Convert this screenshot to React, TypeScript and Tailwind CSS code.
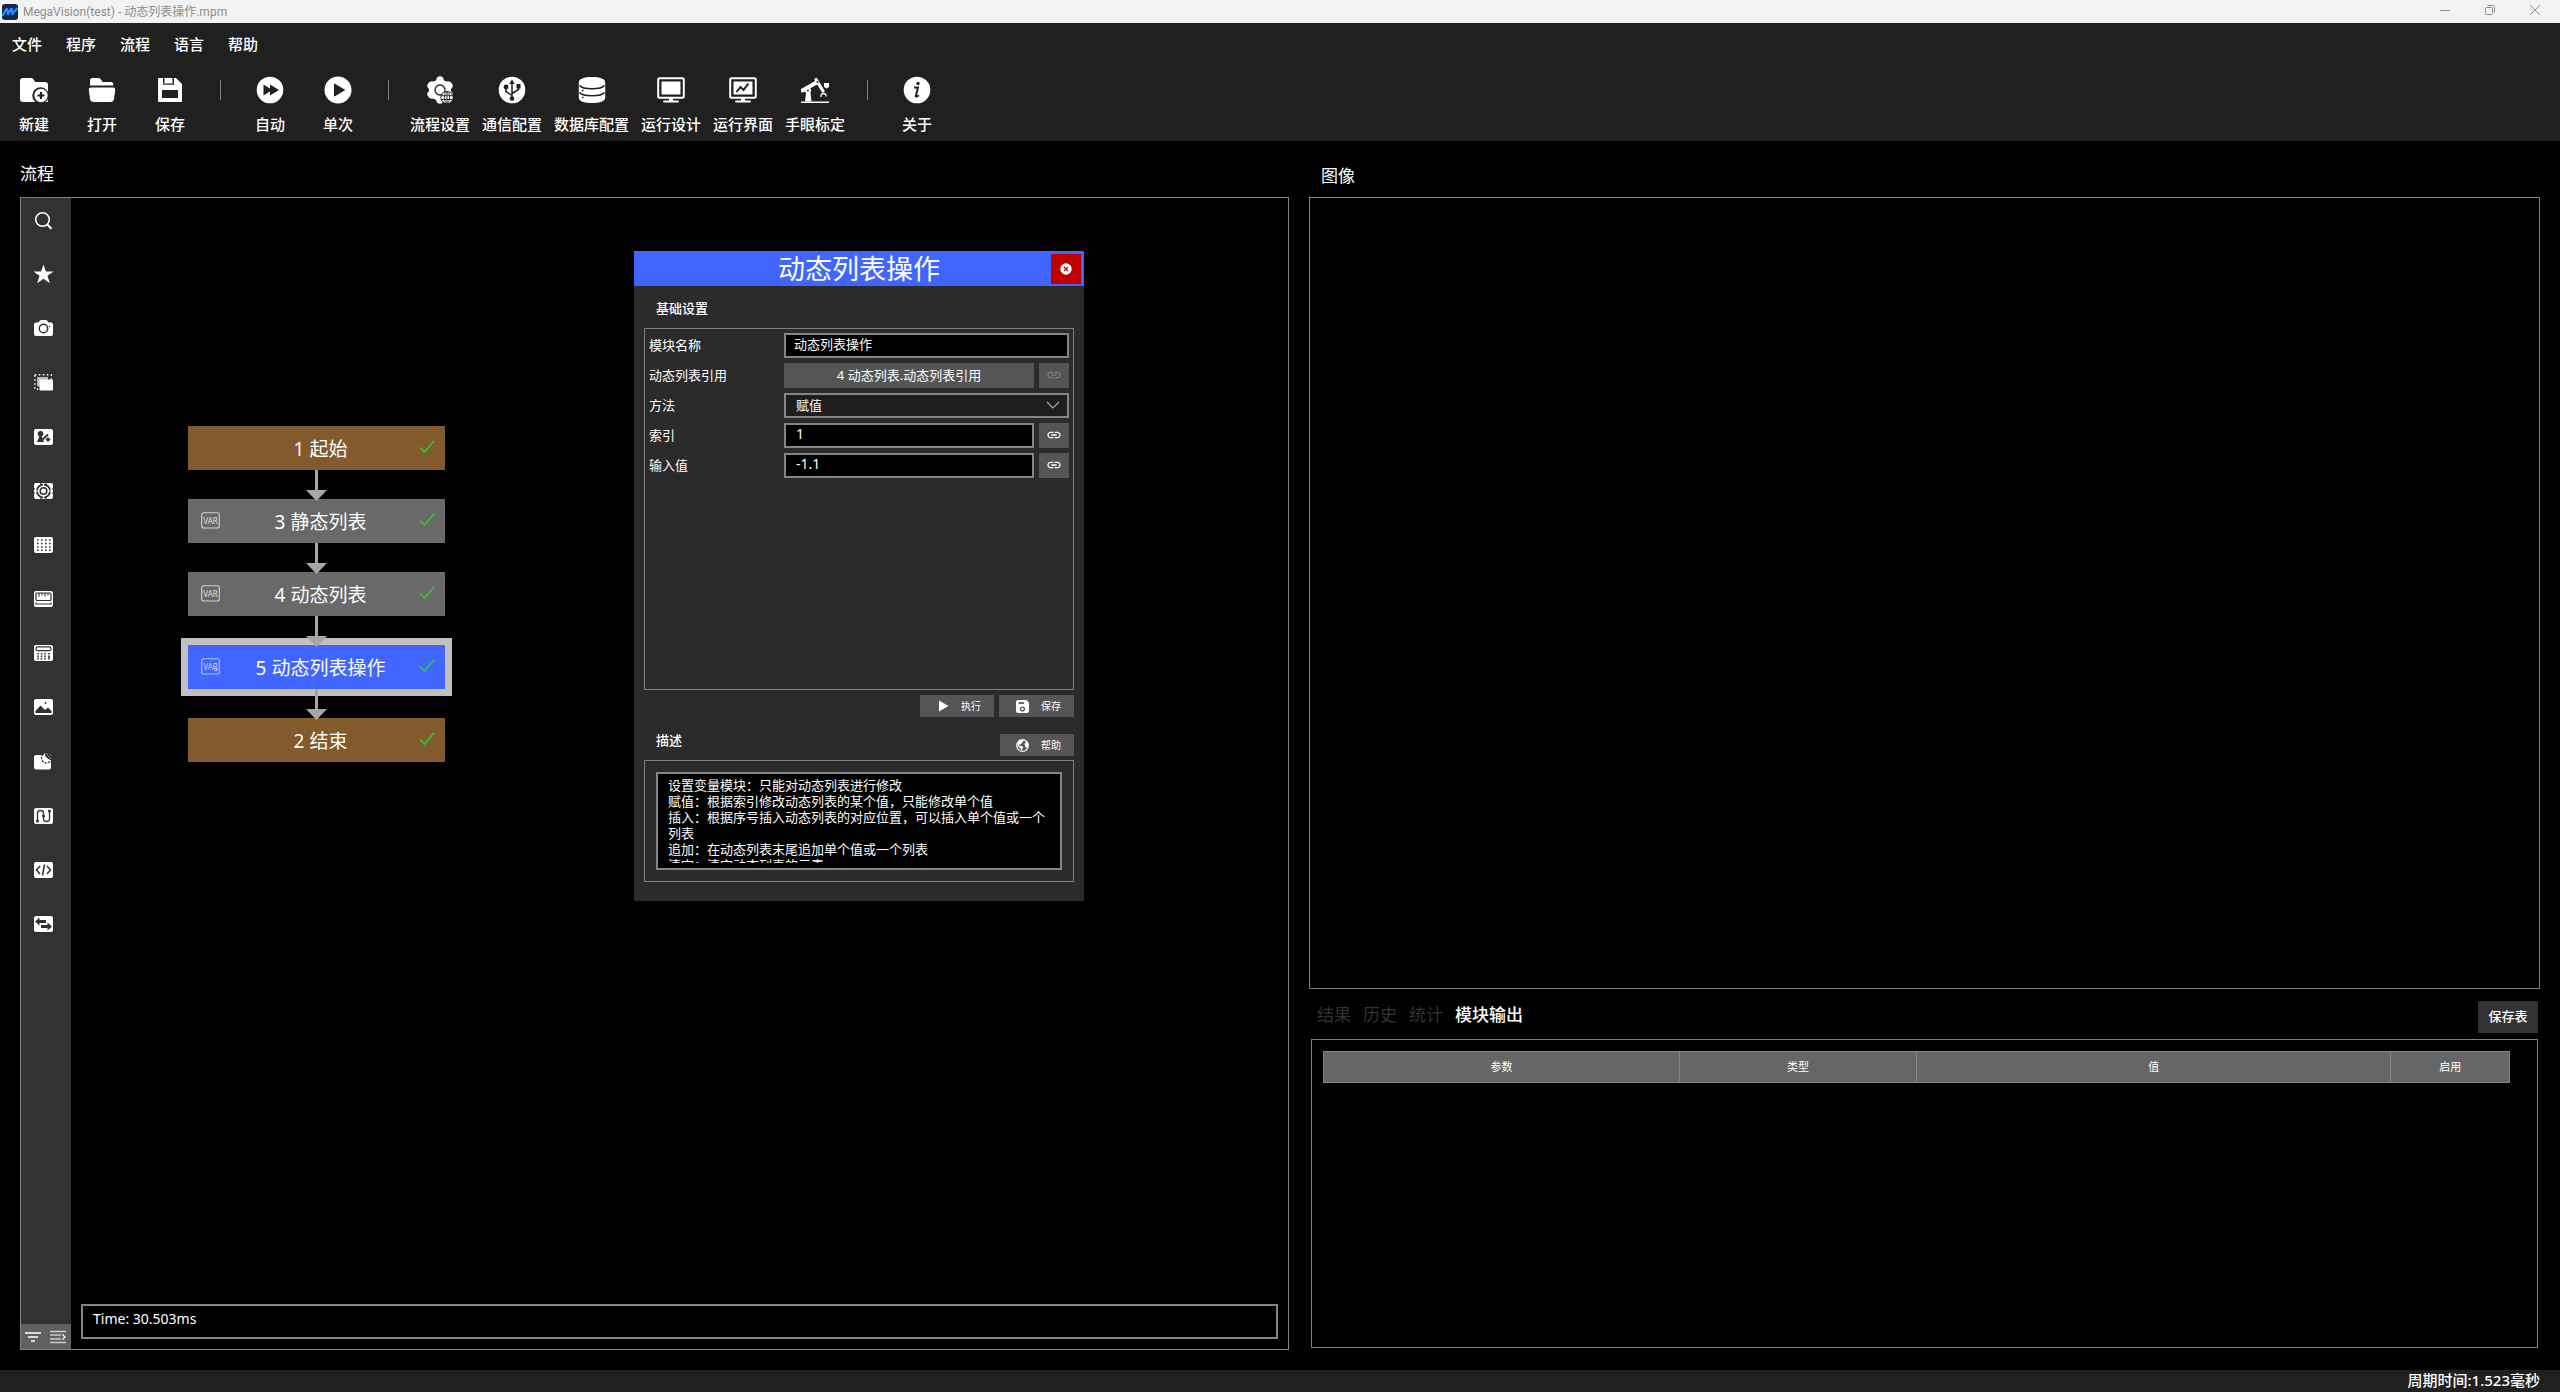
import type { ReactNode } from "react";
import { MdLink } from "react-icons/md";

const menus = ["文件", "程序", "流程", "语言", "帮助"];

const Gear = () => (
  <svg width="28" height="28" viewBox="0 0 28 28">
    <path
      fill="#fff"
      d="M11 1.5Q14-.8 17 1.500L18 4.500L21 5.500Q24.500 4.500 26.500 8.500Q27.500 11 25 13V15Q27.500 17 26.500 19.500Q24.500 23 21 22.500L18 24L17 26.500Q14 29 11 26.500L10 24L7 22.500Q3.500 23.500 1.500 19.500Q.5 17 3 15V13Q.5 11 1.500 8.500Q3.500 4.500 7 5.500L10 4.500Z"
    />
    <circle cx="14" cy="14" r="5" fill="none" stroke="#202020" strokeWidth="1.3" />
    <circle cx="21" cy="21.500" r="6.600" fill="#202020" />
    <circle cx="21" cy="21.500" r="5.700" fill="#fff" />
    <g fill="none" stroke="#202020" strokeWidth="0.9">
      <ellipse cx="21" cy="21.500" rx="2.600" ry="5.700" />
      <path d="M15.300 19.700h11.400M15.300 23.500h11.400M21 16v11" />
    </g>
  </svg>
);

const Monitor = ({ chart }: { chart?: boolean }) => (
  <svg width="28" height="28" viewBox="0 0 28 28">
    <rect x="1.200" y="2.200" width="25.600" height="19.600" rx="1.500" fill="#202020" stroke="#fff" strokeWidth="2" />
    <rect x="4.500" y="5.500" width="19" height="13" fill="#fff" />
    {chart && <path d="M7.500 16l4-5 3 3 5-6.500" fill="none" stroke="#202020" strokeWidth="2" />}
    <path d="M12 22h4v2.500h5a1 1 0 0 1 0 2H7a1 1 0 0 1 0-2h5z" fill="#fff" />
  </svg>
);

const toolIcons: Record<string, ReactNode> = {
  新建: (
    <svg width="28" height="28" viewBox="0 0 28 28">
      <path d="M3 2h8q2 0 3 2l1 2h10q3 0 3 3v17H3q-3 0-3-3V5q0-3 3-3z" fill="#fff" />
      <circle cx="20.500" cy="19.500" r="8.200" fill="#202020" />
      <circle cx="21" cy="19.500" r="6.700" fill="#fff" />
      <path d="M21 16v7M17.500 19.500h7" stroke="#202020" strokeWidth="2.200" />
    </svg>
  ),
  打开: (
    <svg width="28" height="28" viewBox="0 0 28 28">
      <path d="M2 9.500V4.500Q2 2 4.500 2h6q1.500 0 2.500 1.500L14.500 6H23q2.500 0 2.500 3.500z" fill="#fff" />
      <path d="M3 11.500h22q2.500 0 2.200 2.500L26 23q-.5 3-3.500 3h-17Q2.500 26 2 23L.8 14q-.3-2.500 2.200-2.500z" fill="#fff" />
    </svg>
  ),
  保存: (
    <svg width="28" height="28" viewBox="0 0 28 28">
      <path d="M3 2h17l6 6v17q0 1-1 1H3q-1 0-1-1V3q0-1 1-1z" fill="#fff" />
      <path d="M7 2v7h11V2M6 14h16v8H6z" fill="#202020" />
      <path d="M8.500 2h8v5.500h-8z" fill="#fff" />
      <path d="M7 8h10.500" stroke="#888" strokeWidth="1.400" />
    </svg>
  ),
  自动: (
    <svg width="28" height="28" viewBox="0 0 28 28">
      <circle cx="14" cy="14" r="13.300" fill="#fff" />
      <path d="M7.500 8.500l6.500 4V8.500l9 5.500-9 5.500v-4l-6.500 4z" fill="#202020" />
    </svg>
  ),
  单次: (
    <svg width="28" height="28" viewBox="0 0 28 28">
      <circle cx="14" cy="14" r="13.500" fill="#fff" />
      <path d="M10.500 8l10 6-10 6z" fill="#202020" stroke="#202020" strokeLinejoin="round" />
    </svg>
  ),
  流程设置: <Gear />,
  通信配置: (
    <svg width="28" height="28" viewBox="0 0 28 28">
      <circle cx="14" cy="14" r="13.300" fill="#fff" />
      <g fill="none" stroke="#202020" strokeWidth="1.500">
        <path d="M14 6v16M14 19.500l-6-4v-4M14 17.500l6.500-4V10" />
      </g>
      <path d="M14 3.500l2.800 4.500h-5.600zM18.500 8h4v4.500h-4z" fill="#202020" />
      <circle cx="8" cy="11" r="2.400" fill="#202020" />
      <circle cx="14" cy="22.500" r="2.300" fill="#202020" />
    </svg>
  ),
  数据库配置: (
    <svg width="28" height="28" viewBox="0 0 28 28">
      <path d="M.8 6C.8 3 6 1 14 1s13.200 2 13.200 5v16c0 3-5.200 5-13.200 5S.8 25 .8 22z" fill="#fff" />
      <path d="M1.500 9.500q2.500 3.300 12.500 3.300t12.500-3.300M1.500 16.500q2.500 3.300 12.500 3.300t12.500-3.300" fill="none" stroke="#202020" strokeWidth="1.500" />
      <path d="M4 14.500h1.500M4 21.500h1.500" stroke="#202020" strokeWidth="1.300" />
    </svg>
  ),
  运行设计: <Monitor />,
  运行界面: <Monitor chart />,
  手眼标定: (
    <svg width="28" height="28" viewBox="0 0 28 28">
      <path d="M0 25.500h28v1.500H0z" fill="#fff" />
      <path d="M4 25.500L5 17h4.500l1 8.500z" fill="#fff" />
      <circle cx="7" cy="14.500" r="3" fill="#fff" />
      <path d="M1.500 14.500L15.500 6.500" stroke="#fff" strokeWidth="4" strokeLinecap="round" />
      <path d="M15 3.500L22 15" stroke="#fff" strokeWidth="3.200" strokeLinecap="round" />
      <circle cx="7" cy="14.500" r="1" fill="#202020" />
      <circle cx="16.500" cy="6" r="1" fill="#202020" />
      <path d="M23 7h5v4l-2.500 1.500L23 11z" fill="#fff" />
      <path d="M20 21q-.5-3.500 2.500-3.500T25 20.500" fill="none" stroke="#fff" strokeWidth="1.300" />
    </svg>
  ),
  关于: (
    <svg width="28" height="28" viewBox="0 0 28 28">
      <circle cx="14" cy="14" r="13.300" fill="#fff" />
      <circle cx="15" cy="7.500" r="1.700" fill="#202020" />
      <path d="M11 11.500h4l-2.200 8.500q-.2 1.700 3-.8" fill="none" stroke="#202020" strokeWidth="2" />
    </svg>
  ),
};

const toolGroups = [
  ["新建", "打开", "保存"],
  ["自动", "单次"],
  ["流程设置", "通信配置", "数据库配置", "运行设计", "运行界面", "手眼标定"],
  ["关于"],
];

// tile behind most of the module icons
const Tile = ({ children }: { children?: ReactNode }) => (
  <>
    <rect width="19" height="16" rx="2" fill="#fff" />
    {children}
  </>
);

const D = "#323232";

const modules: { name: string; icon: ReactNode }[] = [
  {
    name: "搜索",
    icon: (
      <g fill="none" stroke="#fff" strokeWidth="1.600">
        <circle cx="8.500" cy="7.500" r="6.800" />
        <path d="M13.300 12.500l4.200 4.300" strokeWidth="2" />
      </g>
    ),
  },
  { name: "收藏", icon: <path fill="#fff" d="M9.500-1.500l2.400 7H19.500l-6 4.300 2.300 7.400-6.300-4.500-6.300 4.500 2.300-7.400L-.5 5.500h7.600z" /> },
  {
    name: "相机",
    icon: (
      <>
        <path fill="#fff" d="M2 2.500h2.500L6 .5Q6.500 0 7 0h5q.5 0 1 .5l1.500 2H17q2 0 2 2V14q0 2-2 2H2q-2 0-2-2V4.500q0-2 2-2z" />
        <circle cx="9.500" cy="8.500" r="4.200" fill="none" stroke={D} strokeWidth="1.400" />
        <circle cx="15.500" cy="6.500" r=".7" fill={D} />
      </>
    ),
  },
  {
    name: "区域",
    icon: (
      <>
        <rect x=".8" y=".8" width="16.500" height="14.500" fill="none" stroke="#fff" strokeWidth="1.500" strokeDasharray="1.500 2.500" />
        <rect x="3" y="3" width="11" height="9.500" fill="#bbb" />
        <rect x="5.500" y="5.500" width="13.500" height="11" rx="1" fill="#fff" />
      </>
    ),
  },
  {
    name: "定位",
    icon: (
      <Tile>
        <circle cx="6.500" cy="4.800" r="2.800" fill={D} />
        <path d="M5.500 7h2l2.500 6H3z" fill={D} />
        <path d="M8.500 10.500l5.500-5" stroke={D} strokeWidth="1.800" />
        <path d="M14 8.500l2 2-2 2-2-2z" fill={D} stroke={D} />
      </Tile>
    ),
  },
  {
    name: "匹配",
    icon: (
      <Tile>
        <circle cx="9.500" cy="8" r="6.500" fill="none" stroke={D} strokeWidth="1.800" />
        <circle cx="9.500" cy="8" r="3.300" fill="none" stroke={D} strokeWidth="1.600" />
        <path d="M9.500 0v4M9.500 12v4M0 8h5M14 8h5" stroke="#fff" strokeWidth="1.200" />
        <path d="M6 0h1.500M11.500 0H13M6 16h1.500M11.500 16H13M0 5v1.500M0 9.500V11M19 5v1.500M19 9.500V11" stroke={D} strokeWidth="1.500" />
      </Tile>
    ),
  },
  {
    name: "标定",
    icon: (
      <Tile>
        <path d="M3 3h14M3 6.500h14M3 10h14M3 13.300h14" stroke={D} strokeWidth="1.500" strokeDasharray="1.600 2.400" />
      </Tile>
    ),
  },
  {
    name: "测量",
    icon: (
      <Tile>
        <rect x="2" y="2" width="15" height="7.500" rx="1" fill="none" stroke={D} strokeWidth="1.200" />
        <path d="M5 2v3.500M8 2v2.500M11 2v3.500M14 2v2.500" stroke={D} strokeWidth="1.100" />
        <path d="M2 11.500V13h15v-1.500" fill="none" stroke={D} strokeWidth="1.200" />
      </Tile>
    ),
  },
  {
    name: "计算",
    icon: (
      <Tile>
        <rect x="2" y="1.800" width="15" height="3.800" rx="1.500" fill="none" stroke={D} strokeWidth="1.200" />
        <path d="M4 8v6.500M7.500 8v6.500M11 8v6.500" stroke={D} strokeWidth="1.500" strokeDasharray="1.600 .8" />
        <path d="M15 8v1.500M15 10.500v4" stroke={D} strokeWidth="1.600" />
      </Tile>
    ),
  },
  {
    name: "图像",
    icon: (
      <Tile>
        <path d="M1.500 14v-2l5-5.500 4.500 4.500 3-2.500 3.500 3.500v2z" fill={D} />
        <circle cx="11.500" cy="4" r=".9" fill={D} />
      </Tile>
    ),
  },
  {
    name: "缺陷",
    icon: (
      <>
        <rect y="2" width="17" height="14.500" rx="2" fill="#fff" />
        <circle cx="12.500" cy="5" r="5" fill="#fff" stroke={D} strokeWidth="1.200" strokeDasharray="2.500 1" />
        <path d="M11.500 0q7 0 7 6.500-2 1-4-.5T11 3z" fill={D} />
        <path d="M12 .5l5 5.500M16 1l1 2" stroke="#999" strokeWidth=".8" />
      </>
    ),
  },
  {
    name: "运动",
    icon: (
      <Tile>
        <path d="M3.500 13V5q0-2.500 3-2.500t3 2.500v6q0 2.500 3 2.500t3-2.500V3" fill="none" stroke={D} strokeWidth="1.300" />
        <circle cx="3.500" cy="13" r="1.500" fill={D} />
        <circle cx="9.500" cy="8" r="1.500" fill={D} />
        <circle cx="15.500" cy="3" r="1.500" fill={D} />
      </Tile>
    ),
  },
  {
    name: "脚本",
    icon: (
      <Tile>
        <path d="M6 4L2.500 8 6 12M13 4l3.500 4L13 12M10.500 2.500l-2 11" fill="none" stroke={D} strokeWidth="1.500" />
      </Tile>
    ),
  },
  {
    name: "通信",
    icon: (
      <Tile>
        <path d="M1 5.500L5.500 1.500v2.500H12v3H5.500v2.500zM18 10.500l-4.500 4V12H7V9h6.500V6.500z" fill={D} />
      </Tile>
    ),
  },
];

const steps = [
  { label: "1 起始", edge: true },
  { label: "3 静态列表" },
  { label: "4 动态列表" },
  { label: "5 动态列表操作", active: true },
  { label: "2 结束", edge: true },
];

const VarIcon = ({ active }: { active?: boolean }) => (
  <svg className="absolute left-[13px] top-[13px]" width="19" height="17" viewBox="0 0 19 17">
    <rect x=".7" y=".7" width="17.600" height="15.300" rx="2" fill="none" stroke={active ? "#b5c2ff" : "#d2d2d2"} strokeWidth="1.100" />
    <text x="9.500" y="11.500" textAnchor="middle" fontSize="8" fill={active ? "#c6d0ff" : "#e0e0e0"}>
      VAR
    </text>
    {active && <path d="M13.500 10.500h3M13.500 12.500h3" stroke="#c6d0ff" />}
  </svg>
);

const Step = ({ label, edge, active, last }: { label: string; edge?: boolean; active?: boolean; last: boolean }) => (
  <div className="relative h-[73px]">
    <div
      className={
        "relative flex h-11 items-center justify-center pt-0.5 pl-2 text-[19px] text-white " +
        (edge ? "bg-[#835a2c]" : active ? "bg-[#4066ff] ring-[7px] ring-[#c0c0c0]" : "bg-[#696969]")
      }
    >
      {!edge && <VarIcon active={active} />}
      <span>{label}</span>
      <svg className="absolute right-[10px] top-[14px]" width="16" height="14" viewBox="0 0 16 14">
        <path d="M1 7.500l4.500 4.500L15 1" fill="none" stroke="#32c832" strokeWidth="1.700" />
      </svg>
    </div>
    {!last && (
      <svg className="absolute left-[118px] top-11 z-10" width="21" height="31" viewBox="0 0 21 31">
        <path d="M9 0h3v20h9L10.500 31 0 20h9z" fill="#a6a6a6" />
      </svg>
    )}
  </div>
);

const LinkButton = ({ disabled }: { disabled?: boolean }) => (
  <button
    aria-label="链接"
    disabled={disabled}
    className="flex w-[30px] items-center justify-center bg-[#555] pb-0.5 text-white disabled:text-[#808080]"
  >
    <MdLink size={16} />
  </button>
);

const Field = ({ id, label, children }: { id: string; label: string; children: ReactNode }) => (
  <div className="flex h-[25px]">
    <label htmlFor={id} className="w-[135px] leading-[24px]">
      {label}
    </label>
    <div className="flex min-w-0 flex-1 gap-[5px]">{children}</div>
  </div>
);

const inputClass = "min-w-0 flex-1 border-2 border-[#858585] bg-black outline-none";

const description = [
  "设置变量模块：只能对动态列表进行修改",
  "赋值：根据索引修改动态列表的某个值，只能修改单个值",
  "插入：根据序号插入动态列表的对应位置，可以插入单个值或一个列表",
  "追加：在动态列表末尾追加单个值或一个列表",
  "清空：清空动态列表的元素",
].join("\n");

const ModuleDialog = () => (
  <div className="absolute left-[563px] top-[53px] flex h-[650px] w-[450px] flex-col bg-[#2b2b2b] text-[13px] text-white">
    <div className="relative flex h-[35px] items-center justify-center bg-[#4066ff]">
      <h2 className="text-[27px] leading-[35px]">动态列表操作</h2>
      <button aria-label="关闭" className="absolute right-[3px] top-[3px] flex size-[30px] items-center justify-center bg-[#c00000]">
        <svg width="12" height="12" viewBox="0 0 12 12">
          <circle cx="6" cy="6" r="5.700" fill="#fff" />
          <path d="M4 4l4 4M8 4l-4 4" stroke="#c00000" strokeWidth="1.200" />
        </svg>
      </button>
    </div>
    <h3 className="px-[22px] pt-3 pb-[10px] leading-5 font-medium">基础设置</h3>
    <div className="mx-[10px] flex h-[362px] flex-col gap-[5px] border border-[#808080] p-1">
      <Field id="name" label="模块名称">
        <input id="name" className={inputClass + " px-2 pb-0.5"} defaultValue="动态列表操作" />
      </Field>
      <Field id="ref" label="动态列表引用">
        <button id="ref" className="flex-1 bg-[#555]">
          4 动态列表.动态列表引用
        </button>
        <LinkButton disabled />
      </Field>
      <Field id="method" label="方法">
        <div className="relative flex flex-1">
          <select id="method" className="flex-1 appearance-none border-2 border-[#858585] bg-[#1e1e1e] px-[10px] outline-none">
            <option>赋值</option>
          </select>
          <svg className="pointer-events-none absolute right-[9px] top-2" width="14" height="9" viewBox="0 0 14 9">
            <path d="M1 1l6 6 6-6" fill="none" stroke="#aaa" strokeWidth="1.200" />
          </svg>
        </div>
      </Field>
      <Field id="index" label="索引">
        <input id="index" className={inputClass + " px-[10px] pb-1 text-[14px]"} defaultValue="1" />
        <LinkButton />
      </Field>
      <Field id="value" label="输入值">
        <input id="value" className={inputClass + " px-[10px] pb-1 text-[14px]"} defaultValue="-1.1" />
        <LinkButton />
      </Field>
    </div>
    <div className="mx-[10px] mt-[5px] flex h-[22px] justify-end gap-[5px] text-[10px]">
      <button className="flex w-[74px] items-center justify-end gap-3 bg-[#555] pr-[13px]">
        <svg width="11" height="12" viewBox="0 0 11 12">
          <path d="M1 .5L10.500 6 1 11.500z" fill="#fff" />
        </svg>
        执行
      </button>
      <button className="flex w-[75px] items-center justify-end gap-3 bg-[#555] pr-[13px]">
        <svg width="13" height="13" viewBox="0 0 13 13">
          <path d="M2 0h8.500L13 2.500V11q0 2-2 2H2q-2 0-2-2V2q0-2 2-2z" fill="#fff" />
          <path d="M2.500 3h5.500" stroke="#555" strokeWidth="1.800" />
          <circle cx="6.500" cy="9" r="1.900" fill="none" stroke="#555" strokeWidth="1.300" />
        </svg>
        保存
      </button>
    </div>
    <div className="mx-[10px] flex h-[43px] items-end justify-between pb-1">
      <h3 className="pb-[6px] pl-3 leading-5 font-medium">描述</h3>
      <button className="flex h-[22px] w-[74px] items-center justify-end gap-3 bg-[#555] pr-[13px] text-[10px]">
        <svg width="13" height="13" viewBox="0 0 13 13">
          <circle cx="6.500" cy="6.500" r="5.800" fill="none" stroke="#fff" strokeWidth="1.200" />
          <path d="M1.500 3.500L4 1.200h3.500L7 3 5.500 4 5 5.500 2.500 5.500 4 7h2.500L7 8.500 5.500 11.800 4.500 9.500 1.500 6.500z" fill="#fff" />
          <path d="M9 3.500L11 3l1 3-.5 3-1.500-.5L8.500 6z" fill="#fff" />
        </svg>
        帮助
      </button>
    </div>
    <div className="mx-[10px] border border-[#808080] p-[11px]">
      <div className="h-[98px] border-2 border-[#858585] bg-black px-[10px] pt-[3px]">
        <textarea
          aria-label="描述"
          readOnly
          className="block h-[86px] w-full resize-none overflow-hidden leading-4 outline-none"
          defaultValue={description}
        />
      </div>
    </div>
  </div>
);

const TitleBar = () => (
  <div className="flex h-[23px] items-center bg-[#f3f3f3] font-[Roboto,'Noto_Sans_CJK_SC',sans-serif] text-[12px] text-[#8c8c8c]">
    <svg className="ml-0.5 mr-[5px]" width="16" height="16" viewBox="0 0 16 16">
      <rect width="16" height="16" rx="3" fill="#17264d" />
      <path d="M.5 12L4 5.500Q5.500 4 5.500 8t1.500.5L9 5q1.200-1 1 3t1.500.5L15.500 4" fill="none" stroke="#1e8dff" strokeWidth="2.300" />
    </svg>
    <span>MegaVision(test) - 动态列表操作.mpm</span>
    <div className="ml-auto flex pr-0.5 pb-[3px]">
      <button aria-label="最小化" className="flex w-[45px] justify-center">
        <svg width="10" height="10" viewBox="0 0 10 10">
          <path d="M0 5.500h10" stroke="#8c8c8c" />
        </svg>
      </button>
      <button aria-label="还原" className="flex w-[45px] justify-center">
        <svg width="10" height="10" viewBox="0 0 10 10">
          <path d="M1.500 2.500h5q1 0 1 1v5q0 1-1 1h-5q-1 0-1-1v-5q0-1 1-1zM2.500.5h5q2 0 2 2v5" fill="none" stroke="#8c8c8c" />
        </svg>
      </button>
      <button aria-label="关闭" className="flex w-[46px] justify-center">
        <svg width="10" height="10" viewBox="0 0 10 10">
          <path d="M0 0l10 10M10 0L0 10" stroke="#8c8c8c" />
        </svg>
      </button>
    </div>
  </div>
);

function App() {
  return (
    <div className="flex h-screen flex-col bg-black font-['Noto_Sans','Noto_Sans_CJK_SC',sans-serif] text-white">
      <TitleBar />
      <header className="bg-[#202020] text-[15px] font-medium">
        <nav className="flex h-11 items-center pb-0.5">
          {menus.map((m) => (
            <button key={m} className="px-3">
              {m}
            </button>
          ))}
        </nav>
        <div className="flex h-[74px]">
          {toolGroups.map((group, i) => (
            <div key={i} className="flex">
              {i > 0 && (
                <div className="flex w-8 justify-center pt-[13px]">
                  <div className="h-5 w-px bg-[#808080]" />
                </div>
              )}
              {group.map((t) => (
                <button key={t} className="flex min-w-[68px] flex-col items-center gap-[9px] px-[6px] pt-[9px]">
                  {toolIcons[t]}
                  <span className="leading-[22px]">{t}</span>
                </button>
              ))}
            </div>
          ))}
        </div>
      </header>

      <main className="grid min-h-0 flex-1 grid-cols-[1269fr_1231fr] gap-5 px-5 pb-5">
        <section className="flex min-h-0 flex-col">
          <h1 className="h-14 pt-[22px] text-[17px] leading-[22px]">流程</h1>
          <div className="flex min-h-0 flex-1 border border-[#808080]">
            <aside className="flex w-[50px] flex-col justify-between bg-[#323232]">
              <div className="flex h-[738px] flex-col justify-between pt-[10px] pr-[5px]">
                {modules.map((m) => (
                  <button key={m.name} aria-label={m.name} className="flex h-6 items-center justify-center">
                    <svg className="overflow-visible" width="19" height="16" viewBox="0 0 19 16">
                      {m.icon}
                    </svg>
                  </button>
                ))}
              </div>
              <div className="flex h-[25px] items-center justify-between bg-[#606060] pr-[5px] pl-1">
                <button aria-label="筛选">
                  <svg width="16" height="12" viewBox="0 0 16 12">
                    <path d="M0 2h16M3 6h10M6 10h4" stroke="#fff" strokeWidth="1.600" />
                  </svg>
                </button>
                <button aria-label="展开">
                  <svg width="16" height="14" viewBox="0 0 16 14">
                    <path d="M0 1.500h16M0 5h11M0 9h11M0 12.500h16" stroke="#ccc" strokeWidth="1.300" />
                    <path d="M12.500 4.500L15 7l-2.500 2.500" fill="none" stroke="#fff" strokeWidth="1.300" />
                  </svg>
                </button>
              </div>
            </aside>
            <div className="relative flex min-w-0 flex-1 flex-col justify-end p-[10px]">
              <div className="absolute left-[117px] top-[228px] w-[257px]">
                {steps.map((s, i) => (
                  <Step key={s.label} {...s} last={i === steps.length - 1} />
                ))}
              </div>
              <ModuleDialog />
              <div className="h-[35px] border-2 border-[#858585] px-[10px] pt-[3px] text-[14px] leading-5">Time: 30.503ms</div>
            </div>
          </div>
        </section>

        <section className="flex min-h-0 flex-col">
          <h1 className="h-14 pt-6 pl-3 text-[17px] leading-[22px]">图像</h1>
          <div className="min-h-0 flex-[793] border border-[#808080]" />
          <div className="flex h-[50px] items-start justify-between pt-3 pr-0.5 pl-2">
            <div className="flex gap-3 pt-[3px] text-[17px] leading-[22px] text-[#333]">
              <button>结果</button>
              <button>历史</button>
              <button>统计</button>
              <button className="font-medium text-white">模块输出</button>
            </div>
            <button className="h-8 w-[60px] bg-[#333] text-[13px] font-medium">保存表</button>
          </div>
          <div className="mx-0.5 mb-0.5 min-h-0 flex-[308] border border-[#808080]">
            <div className="pt-[11px] pr-[27px] pl-[11px]">
              <table className="h-8 w-full table-fixed border-collapse bg-[#666] text-[11px]">
                <thead>
                  <tr>
                    <th className="w-[30%] border border-[#858585] font-normal">参数</th>
                    <th className="w-[20%] border border-[#858585] font-normal">类型</th>
                    <th className="w-[40%] border border-[#858585] font-normal">值</th>
                    <th className="w-[10%] border border-[#858585] font-normal">启用</th>
                  </tr>
                </thead>
              </table>
            </div>
          </div>
        </section>
      </main>

      <footer className="flex h-[22px] items-center justify-end bg-[#202020] px-5 pb-0.5 text-[15px] font-medium">
        周期时间:1.523毫秒
      </footer>
    </div>
  );
}

export default App;
